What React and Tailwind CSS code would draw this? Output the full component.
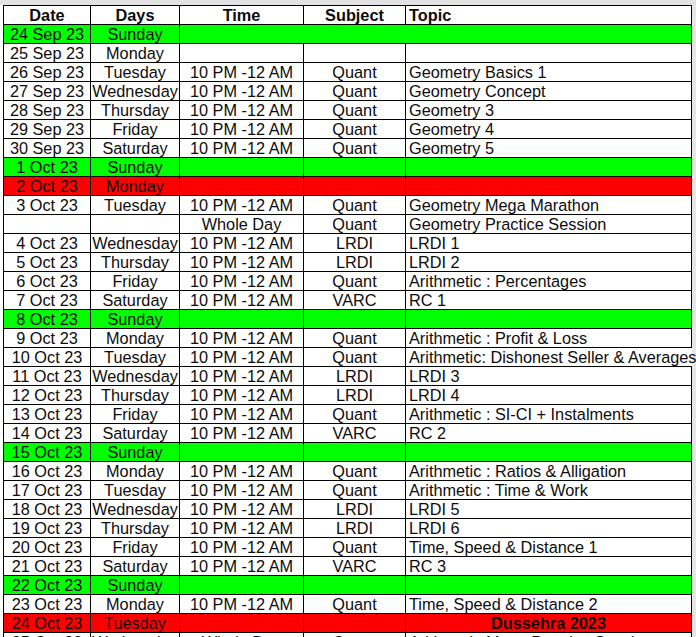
import React from 'react';

const GREEN = 'green';
const RED = 'red';

// date, day, time, subject, topic, kind, merged
const rows = [
    ['24 Sep 23', 'Sunday', '', '', '', GREEN, true],
    ['25 Sep 23', 'Monday', '', '', ''],
    ['26 Sep 23', 'Tuesday', '10 PM -12 AM', 'Quant', 'Geometry Basics 1'],
    ['27 Sep 23', 'Wednesday', '10 PM -12 AM', 'Quant', 'Geometry Concept'],
    ['28 Sep 23', 'Thursday', '10 PM -12 AM', 'Quant', 'Geometry 3'],
    ['29 Sep 23', 'Friday', '10 PM -12 AM', 'Quant', 'Geometry 4'],
    ['30 Sep 23', 'Saturday', '10 PM -12 AM', 'Quant', 'Geometry 5'],
    ['1 Oct 23', 'Sunday', '', '', '', GREEN],
    ['2 Oct 23', 'Monday', '', '', '', RED],
    ['3 Oct 23', 'Tuesday', '10 PM -12 AM', 'Quant', 'Geometry Mega Marathon'],
    ['', '', 'Whole Day', 'Quant', 'Geometry Practice Session'],
    ['4 Oct 23', 'Wednesday', '10 PM -12 AM', 'LRDI', 'LRDI 1'],
    ['5 Oct 23', 'Thursday', '10 PM -12 AM', 'LRDI', 'LRDI 2'],
    ['6 Oct 23', 'Friday', '10 PM -12 AM', 'Quant', 'Arithmetic : Percentages'],
    ['7 Oct 23', 'Saturday', '10 PM -12 AM', 'VARC', 'RC 1'],
    ['8 Oct 23', 'Sunday', '', '', '', GREEN],
    ['9 Oct 23', 'Monday', '10 PM -12 AM', 'Quant', 'Arithmetic : Profit & Loss'],
    ['10 Oct 23', 'Tuesday', '10 PM -12 AM', 'Quant', 'Arithmetic: Dishonest Seller & Averages', 'overflow'],
    ['11 Oct 23', 'Wednesday', '10 PM -12 AM', 'LRDI', 'LRDI 3'],
    ['12 Oct 23', 'Thursday', '10 PM -12 AM', 'LRDI', 'LRDI 4'],
    ['13 Oct 23', 'Friday', '10 PM -12 AM', 'Quant', 'Arithmetic : SI-CI + Instalments'],
    ['14 Oct 23', 'Saturday', '10 PM -12 AM', 'VARC', 'RC 2'],
    ['15 Oct 23', 'Sunday', '', '', '', GREEN],
    ['16 Oct 23', 'Monday', '10 PM -12 AM', 'Quant', 'Arithmetic : Ratios & Alligation'],
    ['17 Oct 23', 'Tuesday', '10 PM -12 AM', 'Quant', 'Arithmetic : Time & Work'],
    ['18 Oct 23', 'Wednesday', '10 PM -12 AM', 'LRDI', 'LRDI 5'],
    ['19 Oct 23', 'Thursday', '10 PM -12 AM', 'LRDI', 'LRDI 6'],
    ['20 Oct 23', 'Friday', '10 PM -12 AM', 'Quant', 'Time, Speed & Distance 1'],
    ['21 Oct 23', 'Saturday', '10 PM -12 AM', 'VARC', 'RC 3'],
    ['22 Oct 23', 'Sunday', '', '', '', GREEN],
    ['23 Oct 23', 'Monday', '10 PM -12 AM', 'Quant', 'Time, Speed & Distance 2'],
    ['24 Oct 23', 'Tuesday', '', '', 'Dussehra 2023', RED],
    ['25 Oct 23', 'Wednesday', 'Whole Day', 'Quant', 'Arithmetic Mega Practice Session'],
];

const cols = 'grid grid-cols-[87px_89px_124px_102px_286px] h-[19px] border-b border-black';
const cell = 'border-r border-black text-center whitespace-nowrap overflow-hidden';

const Row = ({ r }) => {
    const [date, day, time, subject, topic, kind, merged] = r;
    const bg = kind === GREEN ? 'bg-[#00ff00]' : kind === RED ? 'bg-[#ff0000]' : 'bg-white';

    if (merged) {
        return (
            <div className={`${cols} ${bg}`}>
                <div className={cell}>{date}</div>
                <div className={cell}>{day}</div>
                <div className={`${cell} col-span-3`}></div>
            </div>
        );
    }

    return (
        <div className={`${cols} ${bg}`}>
            <div className={cell}>{date}</div>
            <div className={cell}>{day}</div>
            <div className={cell}>{time}</div>
            <div className={cell}>{subject}</div>
            {kind === RED && topic ? (
                <div className={`${cell} font-bold`}>{topic}</div>
            ) : kind === 'overflow' ? (
                <div className="pl-[3px] whitespace-nowrap overflow-visible text-left">{topic}</div>
            ) : (
                <div className="border-r border-black pl-[3px] whitespace-nowrap overflow-hidden text-left">{topic}</div>
            )}
        </div>
    );
};

export default function App() {
    return (
        <div className="w-[696px] h-[637px] overflow-hidden bg-[#e6e6e6] font-['Liberation_Sans',Arial,sans-serif] text-[16.3px] leading-[18px] text-[#0d0d0d]">
            <div className="h-[5px] bg-[#e2e2e2]"></div>
            <div className="flex">
                <div className="w-[3px] bg-white"></div>
                <div className="w-[689px] border-l border-t border-black bg-white">
                    <div className={`${cols} font-bold`}>
                        <div className={cell}>Date</div>
                        <div className={cell}>Days</div>
                        <div className={cell}>Time</div>
                        <div className={cell}>Subject</div>
                        <div className="border-r border-black pl-[3px] text-left">Topic</div>
                    </div>
                    {rows.map((r, i) => <Row key={i} r={r} />)}
                </div>
            </div>
        </div>
    );
}
